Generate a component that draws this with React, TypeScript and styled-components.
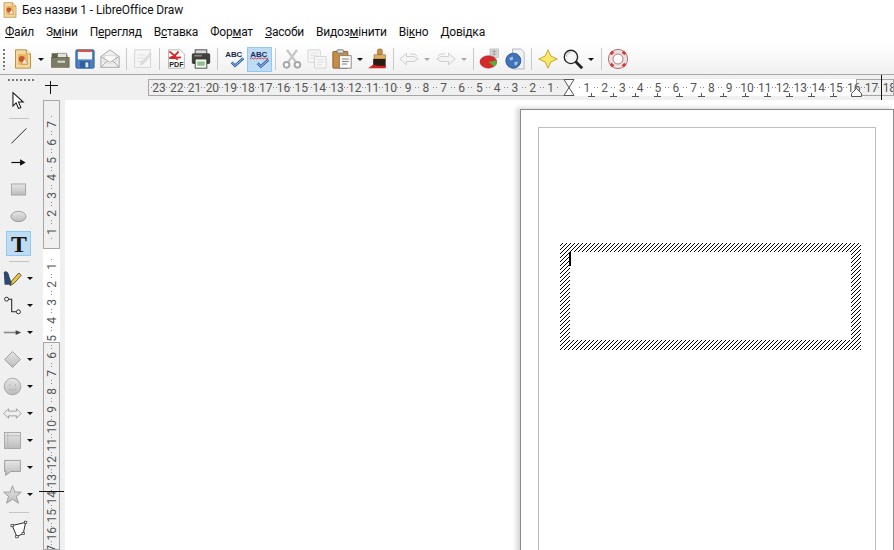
import { ReactNode } from 'react';
import styled, { createGlobalStyle } from 'styled-components';

const CELL = 17.8;

const range = (from: number, to: number) => {
  const out: number[] = [];
  const step = from < to ? 1 : -1;
  for (let i = from; i !== to + step; i += step) out.push(i);
  return out;
};

const icons: Record<string, ReactNode> = {
  newDoc: (
    <>
      <path d="M3 1h13l5 5v17H3z" fill="#f3d9a0" stroke="#b5812c" />
      <path d="M16 1v5h5" fill="#fff3d6" stroke="#b5812c" />
      <rect x="6" y="6" width="12" height="13" fill="#e9b868" />
      <circle cx="10.500" cy="12" r="3.600" fill="#c8552a" />
      <path d="M10 18l4-7 4 7z" fill="#f7efd8" stroke="#a5662a" strokeWidth="0.6" />
    </>
  ),
  open: (
    <>
      <path d="M2 5h8l1.500 2H21v14H2z" fill="#5f6249" />
      <rect x="9" y="5" width="11" height="6" fill="#e4e4dc" stroke="#55583f" strokeWidth="0.6" />
      <rect x="2" y="10" width="21" height="12" fill="#7b7d62" stroke="#4c4e38" strokeWidth="0.6" />
      <rect x="9" y="14" width="9" height="2.500" fill="#d8d8cc" />
    </>
  ),
  save: (
    <>
      <rect x="1" y="1" width="22" height="22" rx="1.500" fill="#4a7fc0" stroke="#2a5b98" />
      <rect x="3.500" y="1" width="17" height="2.500" fill="#d94c3a" />
      <rect x="3.500" y="3.500" width="17" height="9" fill="#f4f6f8" />
      <rect x="6" y="14.500" width="12" height="8.500" fill="#2f5f9c" />
      <rect x="12.500" y="16" width="3.500" height="6" fill="#d8e4f0" />
    </>
  ),
  mail: (
    <>
      <path d="M1 9l11-8 11 8v13H1z" fill="#efefef" stroke="#9b9b9b" />
      <path d="M5 8h14v7l-7 3-7-3z" fill="#fafafa" stroke="#bbb" strokeWidth="0.6" />
      <path d="M1 9l11 7 11-7M1 22l8-8M23 22l-8-8" fill="none" stroke="#9b9b9b" />
    </>
  ),
  edit: (
    <>
      <rect x="2" y="1" width="19" height="21" fill="#f6f6f6" stroke="#cfcfcf" />
      <path d="M5 7h10M5 11h8M5 15h6" stroke="#dcdcdc" />
      <path d="M10 16l10-11 2 2-10 11-3 1z" fill="#e0e0e0" stroke="#c4c4c4" strokeWidth="0.6" />
    </>
  ),
  pdf: (
    <>
      <path d="M3 1h14l5 5v17H3z" fill="#fff" stroke="#aaa" />
      <path d="M4 3c5 3 7 5 10 10M15 3c-3 5-6 6-11 8 5 0 10-1 14-1" fill="none" stroke="#d8262a" strokeWidth="2.200" />
      <text x="12.500" y="22" fontFamily="Liberation Sans, sans-serif" fontSize="8.500" fontWeight="700" textAnchor="middle" fill="#222">
        PDF
      </text>
    </>
  ),
  print: (
    <>
      <rect x="5" y="1" width="14" height="7" fill="#d8d8d8" stroke="#333" />
      <rect x="1" y="5" width="22" height="13" rx="2" fill="#3f423c" />
      <rect x="4" y="7" width="9" height="2" fill="#8a8a84" />
      <rect x="5" y="12" width="14" height="11" fill="#f2f6ee" stroke="#333" />
      <rect x="7.500" y="15" width="9" height="5" fill="#8cc08a" />
    </>
  ),
  abc: (
    <>
      <text x="10.500" y="10" fontFamily="Liberation Sans, sans-serif" fontSize="9.500" fontWeight="700" textAnchor="middle" fill="#1c2a44">
        ABC
      </text>
      <path d="M8 16l4 4 10-9" fill="none" stroke="#2a5da8" strokeWidth="3.200" />
      <path d="M8 16l4 4 10-9" fill="none" stroke="#bcd6f2" strokeWidth="1" />
    </>
  ),
  abcWave: (
    <>
      <text x="10.500" y="9" fontFamily="Liberation Sans, sans-serif" fontSize="9.500" fontWeight="700" textAnchor="middle" fill="#1c2a64">
        ABC
      </text>
      <path d="M0 12l2-1.500 2 1.500 2-1.500 2 1.500 2-1.500 2 1.500 2-1.500 2 1.500 2-1.500 2 1.500 2-1.500" fill="none" stroke="#d02828" strokeWidth="1" />
      <path d="M9 17l4 4 9-8" fill="none" stroke="#2a5da8" strokeWidth="3.200" />
      <path d="M9 17l4 4 9-8" fill="none" stroke="#d2e4f6" strokeWidth="1" />
    </>
  ),
  cut: (
    <>
      <path d="M6 1l11 15M18 1L7 16" stroke="#c6c6c6" strokeWidth="2.800" />
      <circle cx="5.500" cy="19" r="3.400" fill="#fff" stroke="#a8a8a8" strokeWidth="2.400" />
      <circle cx="18.500" cy="19" r="3.400" fill="#fff" stroke="#a8a8a8" strokeWidth="2.400" />
    </>
  ),
  copy: (
    <>
      <rect x="1" y="1" width="15" height="15" rx="1" fill="#f6f6f6" stroke="#cfcfcf" />
      <path d="M4 5h9M4 8h9M4 11h5" stroke="#dcdcdc" />
      <rect x="9" y="9" width="14" height="14" rx="1" fill="#f6f6f6" stroke="#cfcfcf" />
      <path d="M12 13h8M12 16h8M12 19h6" stroke="#dcdcdc" />
    </>
  ),
  paste: (
    <>
      <rect x="1" y="3" width="18" height="20" rx="1" fill="#c88d43" stroke="#855623" />
      <rect x="6" y="1" width="8" height="4" rx="1" fill="#e2e2e2" stroke="#666" />
      <rect x="9" y="8" width="14" height="15" fill="#fafafa" stroke="#7a7a7a" />
      <path d="M12 12h8M12 15h8M12 18h6" stroke="#666" />
    </>
  ),
  brush: (
    <>
      <rect x="10" y="0" width="6" height="7" rx="2" fill="#c8904a" stroke="#7a5020" strokeWidth="0.6" />
      <rect x="6" y="7" width="14" height="5" fill="#e0b060" stroke="#7a5020" strokeWidth="0.6" />
      <path d="M5 12h15v10H2l3-3z" fill="#2a1a14" />
      <path d="M-1 23l6-4 6 1 9 0v3z" fill="#d22020" />
    </>
  ),
  undo: (
    <path d="M9 5L1 12l8 7v-4h9l5-3-5-3H9zM13 6h6l3 3" fill="#f4f4f4" stroke="#c8c8c8" />
  ),
  redo: (
    <path d="M15 5l8 7-8 7v-4H6l-5-3 5-3h9zM11 6H5L2 9" fill="#f4f4f4" stroke="#c8c8c8" />
  ),
  chart: (
    <>
      <rect x="12" y="0" width="10" height="10" fill="#ddd" stroke="#999" strokeWidth="0.6" />
      <path d="M14 3h6M14 6h6M17 1v8" stroke="#888" strokeWidth="0.8" />
      <ellipse cx="10" cy="15.500" rx="10" ry="7.500" fill="#d8282a" stroke="#8c1a1a" strokeWidth="0.6" />
      <path d="M10 15.500l10-2c1 3 0 6-3 7.500z" fill="#5ca838" />
    </>
  ),
  globe: (
    <>
      <path d="M9 0h10l4 4v20H9z" fill="#f2f2f2" stroke="#aab" />
      <circle cx="10" cy="14" r="9" fill="#3f74b8" stroke="#2a4f86" />
      <path d="M5 11l4-2 1 3-3 2zM11 16l4-1v3l-3 2z" fill="#a8c4e4" />
    </>
  ),
  spark: (
    <path d="M12 1l3.500 7.500L23 12l-7.500 3.500L12 23l-3.500-7.500L1 12l7.500-3.500z" fill="#f9e76a" stroke="#b89a1c" />
  ),
  zoom: (
    <>
      <circle cx="9.500" cy="9.500" r="8" fill="#f6f6f6" stroke="#222" strokeWidth="1.600" />
      <path d="M4 9.500a5.500 5.500 0 0 1 5.500-5.500" fill="none" stroke="#aaa" />
      <path d="M15 15l8 8" stroke="#222" strokeWidth="3.400" />
    </>
  ),
  help: (
    <>
      <circle cx="12" cy="12" r="9" fill="none" stroke="#e8e4e4" strokeWidth="6" />
      <circle cx="12" cy="12" r="11.500" fill="none" stroke="#a03030" strokeWidth="0.8" />
      <circle cx="12" cy="12" r="6" fill="#fff" stroke="#a03030" strokeWidth="0.8" />
      <path d="M6 6L3.500 3.500M18 6l2.500-2.500M6 18l-2.500 2.500M18 18l2.500 2.500" stroke="#d83a3a" strokeWidth="4.500" />
    </>
  ),
  select: (
    <path d="M5 2v17l4-4 3 7 3-1-3-7h6z" fill="#fff" stroke="#111" strokeWidth="1.300" />
  ),
  line: <path d="M3 22L22 3" stroke="#222" strokeWidth="1.200" />,
  arrow: (
    <>
      <path d="M3 12h12" stroke="#111" strokeWidth="1.500" />
      <path d="M14 8l7 4-7 4z" fill="#111" />
    </>
  ),
  rect: <rect x="3" y="5" width="18" height="14" fill="url(#grey)" stroke="#9c9c9c" />,
  ellipse: <ellipse cx="12" cy="12" rx="9.500" ry="6.500" fill="url(#grey)" stroke="#8e8e8e" />,
  text: (
    <text x="12" y="21" fontFamily="Liberation Serif, serif" fontSize="26" fontWeight="700" textAnchor="middle" fill="#14160c">
      T
    </text>
  ),
  pen: (
    <>
      <path d="M1 4c4-3 6 1 7 5s3 6 2 11H2z" fill="#2f4a6e" />
      <path d="M9 21l2-6 9-10 3 3-9 10z" fill="#f0c83c" stroke="#222" strokeWidth="0.9" />
    </>
  ),
  connector: (
    <>
      <path d="M7 4h4v16h6" fill="none" stroke="#222" strokeWidth="1.300" />
      <circle cx="4.500" cy="4" r="2.500" fill="#fff" stroke="#222" strokeWidth="1.200" />
      <circle cx="19.500" cy="20" r="2.500" fill="#fff" stroke="#222" strokeWidth="1.200" />
    </>
  ),
  lineArrow: (
    <>
      <path d="M1 12h16" stroke="#8a8a8a" strokeWidth="2" />
      <path d="M16 9l7 3-7 3z" fill="#444" />
    </>
  ),
  diamond: <path d="M12 2l10 10-10 10L2 12z" fill="url(#grey)" stroke="#8e8e8e" />,
  smiley: (
    <>
      <circle cx="12" cy="12" r="10.500" fill="url(#grey)" stroke="#9a9a9a" />
      <circle cx="8.500" cy="10" r="1" fill="#b0b0b0" />
      <circle cx="15.500" cy="10" r="1" fill="#b0b0b0" />
      <path d="M7 15c3 2 7 2 10 0" fill="none" stroke="#b0b0b0" />
    </>
  ),
  dblArrow: (
    <path d="M1 12l6-6v3h10V6l6 6-6 6v-3H7v3z" fill="#eee" stroke="#8e8e8e" />
  ),
  flow: (
    <>
      <rect x="2" y="2" width="20" height="20" fill="url(#grey)" stroke="#9a9a9a" />
      <path d="M2 6h20M6 2v20" stroke="#b4b4b4" />
    </>
  ),
  callout: (
    <path d="M2 3h20v14H10l-7 5 1-5H2z" fill="url(#grey)" stroke="#8e8e8e" />
  ),
  star: (
    <path d="M12 1l3 8h8l-6 5.500 2.500 8.500-7.500-5-7.500 5L7 14.500 1 9h8z" fill="url(#grey)" stroke="#8e8e8e" />
  ),
  polygon: (
    <>
      <path d="M4 7l17-4-3 14-8 4z" fill="#fff" stroke="#222" strokeWidth="1.200" />
      <rect x="2.500" y="5.500" width="3" height="3" fill="#fff" stroke="#222" strokeWidth="0.8" />
      <rect x="19.500" y="1.500" width="3" height="3" fill="#fff" stroke="#222" strokeWidth="0.8" />
      <rect x="16.500" y="15.500" width="3" height="3" fill="#fff" stroke="#222" strokeWidth="0.8" />
      <rect x="8.500" y="19.500" width="3" height="3" fill="#fff" stroke="#222" strokeWidth="0.8" />
    </>
  ),
  next: <path d="M12 18l2 4h-4z" fill="#c89a40" stroke="#555" strokeWidth="0.8" />,
};

const Icon = ({ name, size = 20 }: { name: string; size?: number }) => (
  <IconSvg width={size} height={size} viewBox="0 0 24 24">
    {icons[name]}
  </IconSvg>
);

const menu: [string, string, string][] = [
  ['', 'Ф', 'айл'],
  ['З', 'м', 'іни'],
  ['П', 'е', 'регляд'],
  ['В', 'с', 'тавка'],
  ['Фор', 'м', 'ат'],
  ['', 'З', 'асоби'],
  ['Видоз', 'м', 'інити'],
  ['Ві', 'к', 'но'],
  ['', 'Д', 'овідка'],
];

const sideTools: { name: string; drop?: boolean; active?: boolean; sep?: boolean }[] = [
  { name: 'select' },
  { name: 'sep', sep: true },
  { name: 'line' },
  { name: 'arrow' },
  { name: 'rect' },
  { name: 'ellipse' },
  { name: 'text', active: true },
  { name: 'sep', sep: true },
  { name: 'pen', drop: true },
  { name: 'connector', drop: true },
  { name: 'lineArrow', drop: true },
  { name: 'diamond', drop: true },
  { name: 'smiley', drop: true },
  { name: 'dblArrow', drop: true },
  { name: 'flow', drop: true },
  { name: 'callout', drop: true },
  { name: 'star', drop: true },
  { name: 'sep', sep: true },
  { name: 'polygon' },
  { name: 'next' },
];

export default function App() {
  return (
    <>
      <GlobalStyle />
      <Window>
        <Defs width="0" height="0">
          <defs>
            <linearGradient id="grey" x1="0" y1="0" x2="0" y2="1">
              <stop offset="0" stopColor="#e6e6e6" />
              <stop offset="1" stopColor="#bcbcbc" />
            </linearGradient>
          </defs>
        </Defs>
        <TitleBar>
          <Icon name="newDoc" size={16} />
          <span>Без назви 1 - LibreOffice Draw</span>
        </TitleBar>
        <MenuBar>
          {menu.map(([a, key, b]) => (
            <MenuItem key={a + key + b}>
              {a}
              <u>{key}</u>
              {b}
            </MenuItem>
          ))}
        </MenuBar>
        <ToolBar>
          <Grip />
          <Btn><Icon name="newDoc" /></Btn>
          <Drop />
          <Btn><Icon name="open" /></Btn>
          <Btn><Icon name="save" /></Btn>
          <Btn><Icon name="mail" /></Btn>
          <Sep />
          <Btn><Icon name="edit" /></Btn>
          <Sep />
          <Btn><Icon name="pdf" /></Btn>
          <Btn><Icon name="print" /></Btn>
          <Sep $w={9} />
          <Btn><Icon name="abc" /></Btn>
          <Btn $active><Icon name="abcWave" /></Btn>
          <Sep $w={7} />
          <Btn><Icon name="cut" /></Btn>
          <Btn><Icon name="copy" /></Btn>
          <Btn><Icon name="paste" /></Btn>
          <Drop />
          <Btn><Icon name="brush" /></Btn>
          <Sep $w={5} />
          <Btn><Icon name="undo" /></Btn>
          <Drop $faded />
          <Btn><Icon name="redo" /></Btn>
          <Drop $faded />
          <Sep $w={7} />
          <Btn><Icon name="chart" /></Btn>
          <Btn><Icon name="globe" /></Btn>
          <Sep />
          <Btn><Icon name="spark" /></Btn>
          <Btn><Icon name="zoom" /></Btn>
          <Drop />
          <Sep />
          <Btn><Icon name="help" /></Btn>
        </ToolBar>
        <Workspace>
          <SideBar>
            <SideGrip />
            {sideTools.map((tool, i) =>
              tool.sep ? (
                <SideSep key={i} />
              ) : (
                <SideRow key={i}>
                  <Btn $active={tool.active} $shift={tool.drop}>
                    <Icon name={tool.name} size={tool.name === 'text' ? 22 : 19} />
                  </Btn>
                  {tool.drop && <SideDrop />}
                </SideRow>
              ),
            )}
          </SideBar>
          <Main>
            <RulerRow>
              <Corner />
              <HRuler>
                <HGrey $w={422.5} $pad={1.6}>
                  {range(23, 1).map((n) => (
                    <Cell key={n}>{n}</Cell>
                  ))}
                </HGrey>
                <HWhite>
                  {range(1, 16).map((n) => (
                    <Cell key={n}>{n}</Cell>
                  ))}
                  <Stops>
                    {range(1, 12).map((n) => (
                      <Stop key={n} />
                    ))}
                  </Stops>
                </HWhite>
                <HGrey $w={38} $pad={5.7}>
                  {range(17, 18).map((n) => (
                    <Cell key={n}>{n}</Cell>
                  ))}
                </HGrey>
                <Hourglass width="12" height="17" viewBox="0 0 12 17">
                  <path d="M1 .5h10L1 16.500h10z" fill="#fff" stroke="#555" />
                </Hourglass>
                <Indent width="11" height="9" viewBox="0 0 11 9">
                  <path d="M5.500.5l5 5v3h-10v-3z" fill="#fff" stroke="#555" />
                </Indent>
                <MouseMarkH />
              </HRuler>
            </RulerRow>
            <Body>
              <VRuler>
                <VGrey $h={149} $end>
                  {range(7, 1).map((n) => (
                    <VCell key={n}><span>{n}</span></VCell>
                  ))}
                  <VTail />
                </VGrey>
                <VWhite>
                  <VHalf />
                  {range(1, 5).map((n) => (
                    <VCell key={n}><span>{n}</span></VCell>
                  ))}
                </VWhite>
                <VGrey $h={208}>
                  <VOffset />
                  {range(6, 17).map((n) => (
                    <VCell key={n}><span>{n}</span></VCell>
                  ))}
                </VGrey>
                <MouseMarkV />
              </VRuler>
              <Canvas>
                <Page>
                  <PageMargin>
                    <Hatch>
                      <HatchInner>
                        <Caret />
                      </HatchInner>
                    </Hatch>
                  </PageMargin>
                </Page>
              </Canvas>
            </Body>
          </Main>
        </Workspace>
      </Window>
    </>
  );
}

const GlobalStyle = createGlobalStyle`
  html, body {
    margin: 0;
    background: #fff;
    overflow: hidden;
  }
  * {
    box-sizing: border-box;
  }
`;
const Window = styled.div`
  width: 894px;
  height: 550px;
  display: flex;
  flex-direction: column;
  overflow: hidden;
  font-family: Roboto, 'Noto Sans', sans-serif;
  color: #111;
`;
const Defs = styled.svg`
  position: absolute;
`;
const IconSvg = styled.svg`
  overflow: visible;
  flex: none;
`;
const TitleBar = styled.div`
  height: 20px;
  display: flex;
  align-items: center;
  gap: 4px;
  padding-left: 2px;
  font-size: 12px;
  letter-spacing: -0.1px;
`;
const MenuBar = styled.div`
  height: 24px;
  display: flex;
  align-items: center;
  padding-left: 5px;
  gap: 12px;
  font-size: 12px;
  letter-spacing: -0.2px;
`;
const MenuItem = styled.span`
  white-space: nowrap;
  u {
    text-underline-offset: 1px;
  }
`;
const ToolBar = styled.div`
  height: 31px;
  display: flex;
  align-items: center;
  padding-left: 3px;
  background: linear-gradient(#fff, #f0f0f0);
  border-bottom: 1px solid #a9a9a9;
`;
const Grip = styled.div`
  width: 2px;
  height: 22px;
  margin-right: 5px;
  background-image: radial-gradient(#777 40%, transparent 50%);
  background-size: 2px 4px;
`;
const Btn = styled.div<{ $active?: boolean; $shift?: boolean }>`
  width: 25px;
  height: 25px;
  flex: none;
  display: flex;
  align-items: center;
  justify-content: center;
  margin-left: ${(p) => (p.$shift ? '-6.5px' : '0')};
  background: ${(p) => (p.$active ? '#c0dcf3' : 'transparent')};
  border: 1px solid ${(p) => (p.$active ? '#90c8f6' : 'transparent')};
`;
const Drop = styled.div<{ $faded?: boolean }>`
  width: 12px;
  height: 25px;
  flex: none;
  position: relative;
  &::after {
    content: '';
    position: absolute;
    left: 3px;
    top: 11px;
    border: 3px solid transparent;
    border-top: 3.5px solid ${(p) => (p.$faded ? '#a8a8a8' : '#111')};
    border-bottom: 0;
  }
`;
const Sep = styled.div<{ $w?: number }>`
  width: ${(p) => p.$w ?? 8}px;
  height: 22px;
  flex: none;
  background: linear-gradient(#c8c8c8, #c8c8c8) center / 1px 100% no-repeat;
`;
const Workspace = styled.div`
  flex: 1;
  display: flex;
  min-height: 0;
  background: #f0f0f0;
`;
const SideBar = styled.div`
  width: 43px;
  flex: none;
  display: flex;
  flex-direction: column;
  align-items: flex-start;
  padding-left: 6px;
  gap: 2px;
`;
const SideGrip = styled.div`
  width: 27px;
  height: 2px;
  margin: 4px 0 5px 1px;
  flex: none;
  background-image: radial-gradient(#777 40%, transparent 50%);
  background-size: 4px 2px;
`;
const SideRow = styled.div`
  display: flex;
  align-items: center;
  flex: none;
`;
const SideDrop = styled.div`
  width: 0;
  height: 0;
  margin-left: 2.5px;
  border: 3px solid transparent;
  border-top: 3.5px solid #111;
  border-bottom: 0;
`;
const SideSep = styled.div`
  width: 20px;
  height: 1px;
  margin: 3px 0 2px 3px;
  flex: none;
  background: #c4c4c4;
`;
const Main = styled.div`
  flex: 1;
  min-width: 0;
  display: flex;
  flex-direction: column;
`;
const RulerRow = styled.div`
  height: 25px;
  flex: none;
  display: flex;
`;
const Corner = styled.div`
  width: 13px;
  height: 13px;
  margin: 6px 0 0 2px;
  flex: none;
  background:
    linear-gradient(#111, #111) 0 4px / 100% 1px no-repeat,
    linear-gradient(#111, #111) 5px 0 / 1px 100% no-repeat;
`;
const HRuler = styled.div`
  flex: 1;
  margin: 4px 0 4px 89.5px;
  display: flex;
  position: relative;
  font-size: 12px;
  color: #555;
`;
const dots = `
  background-image:
    linear-gradient(#8a8a8a, #8a8a8a),
    linear-gradient(#8a8a8a, #8a8a8a);
  background-repeat: no-repeat;
  background-size: 1px 1px;
`;
const HGrey = styled.div<{ $w: number; $pad: number }>`
  width: ${(p) => p.$w}px;
  flex: none;
  display: flex;
  padding-left: ${(p) => p.$pad}px;
  background: #f0f0f0;
  border: 1px solid #a6a6a6;
  overflow: hidden;
  margin-right: -1px;
`;
const HWhite = styled.div`
  width: 287px;
  flex: none;
  display: flex;
  padding-left: 8.9px;
  background: #fff;
  position: relative;
  z-index: 1;
`;
const Cell = styled.div`
  width: ${CELL}px;
  flex: none;
  display: flex;
  align-items: center;
  justify-content: center;
  line-height: 1;
  ${dots}
  background-position: 1px 50%, calc(100% - 1px) 50%;
`;
const Stops = styled.div`
  position: absolute;
  left: 18.5px;
  bottom: -1px;
  display: flex;
  gap: 15px;
`;
const Stop = styled.div`
  width: 7px;
  height: 4px;
  border-bottom: 1px solid #555;
  background: linear-gradient(#555, #555) center / 1px 100% no-repeat;
`;
const Hourglass = styled.svg`
  position: absolute;
  left: 415.5px;
  top: 0;
  z-index: 2;
`;
const Indent = styled.svg`
  position: absolute;
  left: 703.5px;
  bottom: -1px;
  z-index: 2;
`;
const MouseMarkH = styled.div`
  position: absolute;
  left: 733.5px;
  top: -4px;
  bottom: -4px;
  width: 1px;
  background: #111;
  z-index: 3;
`;
const Body = styled.div`
  flex: 1;
  min-height: 0;
  display: flex;
`;
const VRuler = styled.div`
  width: 17px;
  flex: none;
  display: flex;
  flex-direction: column;
  position: relative;
  font-size: 12px;
  color: #555;
`;
const VGrey = styled.div<{ $h: number; $end?: boolean }>`
  height: ${(p) => p.$h}px;
  flex: none;
  display: flex;
  flex-direction: column;
  justify-content: ${(p) => (p.$end ? 'flex-end' : 'flex-start')};
  background: #f0f0f0;
  border: 1px solid #a6a6a6;
  overflow: hidden;
`;
const VWhite = styled.div`
  height: 93px;
  flex: none;
  display: flex;
  flex-direction: column;
  background: #fff;
  position: relative;
  z-index: 1;
`;
const VCell = styled.div`
  height: ${CELL}px;
  flex: none;
  display: flex;
  align-items: center;
  justify-content: center;
  ${dots}
  background-position: 50% 1px, 50% calc(100% - 1px);
  span {
    writing-mode: vertical-rl;
    transform: rotate(180deg);
    line-height: 1;
  }
`;
const VHalf = styled.div`
  height: ${CELL / 2}px;
  flex: none;
`;
const VTail = styled.div`
  height: 8px;
  flex: none;
`;
const VOffset = styled.div`
  height: 3.9px;
  flex: none;
`;
const MouseMarkV = styled.div`
  position: absolute;
  left: -4px;
  width: 25px;
  top: 391px;
  height: 1px;
  background: #111;
  z-index: 3;
`;
const Canvas = styled.div`
  flex: 1;
  min-width: 0;
  margin-left: 5px;
  background: #fff;
  overflow: hidden;
  padding: 9px 0 0 455px;
`;
const Page = styled.div`
  width: 374px;
  height: 600px;
  padding: 17px 17px 0;
  background: #fff;
  border: 1px solid #8a8a8a;
  box-shadow: -3px -1px 5px rgba(0, 0, 0, 0.18);
`;
const PageMargin = styled.div`
  height: 560px;
  padding: 115px 13px 0 21px;
  border: 1px solid #bdbdbd;
`;
const Hatch = styled.div`
  width: 301px;
  height: 107px;
  padding: 9px 10px 10px;
  background: repeating-linear-gradient(-45deg, #000 0 0.8px, #fff 0.8px 2.83px);
`;
const HatchInner = styled.div`
  height: 100%;
  background: #fff;
`;
const Caret = styled.div`
  width: 2px;
  height: 14px;
  margin-left: -1px;
  background: #000;
`;
